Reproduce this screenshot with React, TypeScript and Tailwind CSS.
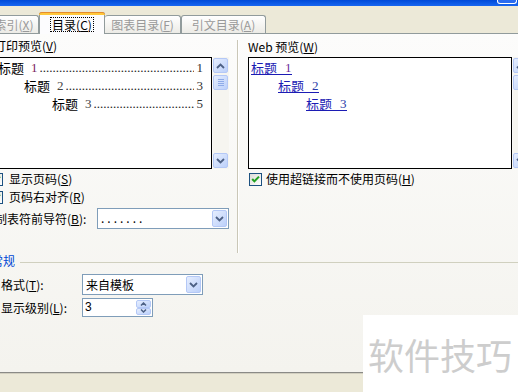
import React from "react";

function Chevron({ dir }: { dir: "up" | "down" }) {
  return (
    <svg width="9" height="6" viewBox="0 0 9 6">
      <path
        d={dir === "up" ? "M1 5 L4.5 1.5 L8 5" : "M1 1 L4.5 4.5 L8 1"}
        fill="none"
        stroke="#4d6185"
        strokeWidth="1.8"
      />
    </svg>
  );
}

function SmallChevron({ dir }: { dir: "up" | "down" }) {
  return (
    <svg width="7" height="4" viewBox="0 0 7 4">
      <path
        d={dir === "up" ? "M1 3.5 L3.5 1 L6 3.5" : "M1 0.5 L3.5 3 L6 0.5"}
        fill="none"
        stroke="#4d6185"
        strokeWidth="1.5"
      />
    </svg>
  );
}

function XPButton({ children, className = "" }: { children?: React.ReactNode; className?: string }) {
  return (
    <div
      className={
        "flex items-center justify-center rounded-[2px] border border-[#b4c8f6] bg-linear-to-br from-[#e6eefe] to-[#bcd0fa] " +
        className
      }
    >
      {children}
    </div>
  );
}

function VScroll() {
  return (
    <div className="flex h-full w-[16px] flex-col bg-[#f6f5f0] py-[1px]">
      <XPButton className="h-[15px] w-[15px]">
        <Chevron dir="up" />
      </XPButton>
      <XPButton className="mt-[2px] h-[15px] w-[15px] flex-col gap-[1px]">
        <div className="h-px w-[6px] bg-[#8eabe8]" />
        <div className="h-px w-[6px] bg-[#8eabe8]" />
        <div className="h-px w-[6px] bg-[#8eabe8]" />
        <div className="h-px w-[6px] bg-[#8eabe8]" />
      </XPButton>
      <div className="flex-1" />
      <XPButton className="h-[15px] w-[15px]">
        <Chevron dir="down" />
      </XPButton>
    </div>
  );
}

function Check() {
  return (
    <div className="flex h-[13px] w-[13px] shrink-0 border border-[#1c5180] bg-linear-to-br from-[#dcdcd7] to-white">
      <svg width="11" height="11" viewBox="0 0 11 11">
        <path d="M2.2 5 L4.4 7.4 L9 2.6" fill="none" stroke="#21a121" strokeWidth="2" />
      </svg>
    </div>
  );
}

const DOTS = ".".repeat(90);

function PrintLine({
  indent,
  num,
  page,
  numColor,
}: {
  indent: string;
  num: string;
  page: string;
  numColor: string;
}) {
  return (
    <div className={"flex h-[18px] items-center text-[13px] leading-[18px] " + indent}>
      <span className="shrink-0">标题</span>
      <span className={"ml-[7px] shrink-0 font-['Liberation_Serif',serif] " + numColor}>{num}</span>
      <span className="ml-[2px] min-w-0 flex-1 overflow-hidden whitespace-nowrap font-['Liberation_Serif',serif] text-[#222]">
        {DOTS}
      </span>
      <span className="ml-[3px] shrink-0 font-['Liberation_Serif',serif] text-[#333]">{page}</span>
    </div>
  );
}

function WebLine({ indent, num, numColor }: { indent: string; num: string; numColor: string }) {
  return (
    <div className={"flex h-[18px] items-center " + indent}>
      <span className="inline-flex h-[14px] items-center border-b border-[#1c1cb4] text-[13px] leading-[13px] text-[#1c1cb4]">
        标题
        <span className={"ml-[8px] font-['Liberation_Serif',serif] " + numColor}>{num}</span>
      </span>
    </div>
  );
}

export default function App() {
  return (
    <div className="relative h-[392px] w-[518px] overflow-hidden bg-[#ece9d8] font-['Noto_Sans_CJK_SC','Noto_Sans',sans-serif] text-[12px] leading-[16px] text-black">
      {/* title bar remnant */}
      <div className="flex h-[6px] justify-end bg-linear-to-b from-[#0049d8] to-[#1766f0] pr-[1px]">
        <div className="h-[4px] w-[20px] rounded-b-[3px] border-x border-b border-white bg-[#2a6cf0]" />
      </div>

      {/* tabs */}
      <div className="flex h-[27px] items-end">
        <div className="-ml-[11px] flex h-[18px] w-[50px] items-center justify-center rounded-t-[3px] border border-b-0 border-[#919b9c] bg-linear-to-b from-white to-[#ecebe6] text-[#999]">
          索引(<u>X</u>)
        </div>
        <div className="relative z-10 -mb-px flex h-[22px] w-[66px] flex-col rounded-t-[3px] border border-b-0 border-[#919b9c] bg-[#fcfcfe]">
          <div className="-mx-px -mt-px h-[3px] rounded-t-[3px] border-t border-[#e68b2c] bg-[#ffc83c]" />
          <div className="flex flex-1 items-center justify-center">
            <span className="border border-dotted border-black px-[1px] leading-[13px]">
              目录(<u>C</u>)
            </span>
          </div>
        </div>
        <div className="flex h-[18px] w-[76px] items-center justify-center rounded-t-[3px] border border-b-0 border-l-0 border-[#919b9c] bg-linear-to-b from-white to-[#ecebe6] text-[#999]">
          图表目录(<u>F</u>)
        </div>
        <div className="flex h-[18px] w-[85px] items-center justify-center rounded-t-[3px] border border-b-0 border-[#919b9c] bg-linear-to-b from-white to-[#ecebe6] text-[#999]">
          引文目录(<u>A</u>)
        </div>
      </div>

      {/* panel */}
      <div className="h-[340px] border-y border-t-[#919b9c] border-b-[#8a8a86] bg-linear-to-b from-[#fcfcfb] to-[#f4f3ee] shadow-[0_1px_0_#d2cfc0]">
        <div className="flex h-[219px]">
          {/* left column */}
          <div className="-ml-[6px] flex w-[235px] shrink-0 flex-col">
            <div className="mt-[4px] h-[16px]">
              打印预览(<u>V</u>)
            </div>
            <div className="mt-[3px] flex h-[112px]">
              <div className="min-w-0 flex-1 border border-black bg-white pr-[8px] pl-[3px] pt-[1px]">
                <PrintLine indent="pl-0" num="1" page="1" numColor="text-[#7a1f5e]" />
                <PrintLine indent="pl-[26px]" num="2" page="3" numColor="text-[#444]" />
                <PrintLine indent="pl-[54px]" num="3" page="5" numColor="text-[#444]" />
              </div>
              <div className="ml-[1px] shrink-0">
                <VScroll />
              </div>
            </div>
            <div className="mt-[2px] flex h-[16px] items-center">
              <div className="-ml-[4px]">
                <Check />
              </div>
              <span className="ml-[6px]">
                显示页码(<u>S</u>)
              </span>
            </div>
            <div className="mt-[2px] flex h-[16px] items-center">
              <div className="-ml-[4px]">
                <Check />
              </div>
              <span className="ml-[6px]">
                页码右对齐(<u>R</u>)
              </span>
            </div>
            <div className="mt-[3px] flex h-[21px] items-center">
              <span className="ml-[1px]">
                制表符前导符(<u>B</u>):
              </span>
              <div className="ml-auto flex h-[21px] w-[132px] border border-[#7f9db9] bg-white">
                <div className="flex-1 pl-[3px] leading-[17px] tracking-[3px]">.......</div>
                <XPButton className="m-[1px] w-[15px]">
                  <Chevron dir="down" />
                </XPButton>
              </div>
            </div>
          </div>

          {/* divider */}
          <div className="ml-[8px] mt-[6px] h-[213px] w-[2px] shrink-0 border-x border-l-[#cac7b7] border-r-white" />

          {/* right column */}
          <div className="ml-[9px] flex w-[300px] shrink-0 flex-col">
            <div className="mt-[5px] h-[16px]">
              Web 预览(<u>W</u>)
            </div>
            <div className="mt-[2px] flex h-[112px]">
              <div className="w-[264px] shrink-0 border border-black bg-white pl-[2px] pt-[1px]">
                <WebLine indent="pl-0" num="1" numColor="text-[#6a2a9a]" />
                <WebLine indent="pl-[27px]" num="2" numColor="text-[#2a3aa8]" />
                <WebLine indent="pl-[55px]" num="3" numColor="text-[#2a3aa8]" />
              </div>
              <div className="ml-[1px] shrink-0">
                <VScroll />
              </div>
            </div>
            <div className="mt-[2px] flex h-[16px] items-center">
              <div className="ml-[1px]">
                <Check />
              </div>
              <span className="ml-[4px]">
                使用超链接而不使用页码(<u>H</u>)
              </span>
            </div>
          </div>
        </div>

        {/* 常规 group */}
        <div className="flex h-[16px] items-center">
          <span className="-ml-[9px] text-[#0046d5]">常规</span>
          <div className="ml-[5px] mt-[2px] h-px flex-1 bg-[#d0d0bf]" />
        </div>
        <div className="mt-[5px] flex h-[21px] items-center">
          <span className="w-[82px] shrink-0 pl-[1px]">
            格式(<u>T</u>):
          </span>
          <div className="flex h-[21px] w-[121px] border border-[#7f9db9] bg-white">
            <div className="flex-1 pl-[3px] leading-[19px]">来自模板</div>
            <XPButton className="m-[1px] w-[15px]">
              <Chevron dir="down" />
            </XPButton>
          </div>
        </div>
        <div className="mt-[3px] flex h-[19px] items-center">
          <span className="w-[82px] shrink-0 pl-[1px]">
            显示级别(<u>L</u>):
          </span>
          <div className="flex h-[19px] w-[71px] border border-[#7f9db9] bg-white">
            <div className="flex-1 pl-[2px] font-['Liberation_Sans',sans-serif] leading-[17px]">3</div>
            <div className="m-[1px] flex w-[15px] flex-col">
              <XPButton className="h-1/2">
                <SmallChevron dir="up" />
              </XPButton>
              <XPButton className="h-1/2">
                <SmallChevron dir="down" />
              </XPButton>
            </div>
          </div>
        </div>
      </div>

      {/* watermark */}
      <div className="absolute left-[363px] top-[315px] flex h-[77px] w-[155px] items-center bg-white pl-[5px] text-[36px] leading-none text-[#cdcdcd]">
        软件技巧
      </div>
    </div>
  );
}
